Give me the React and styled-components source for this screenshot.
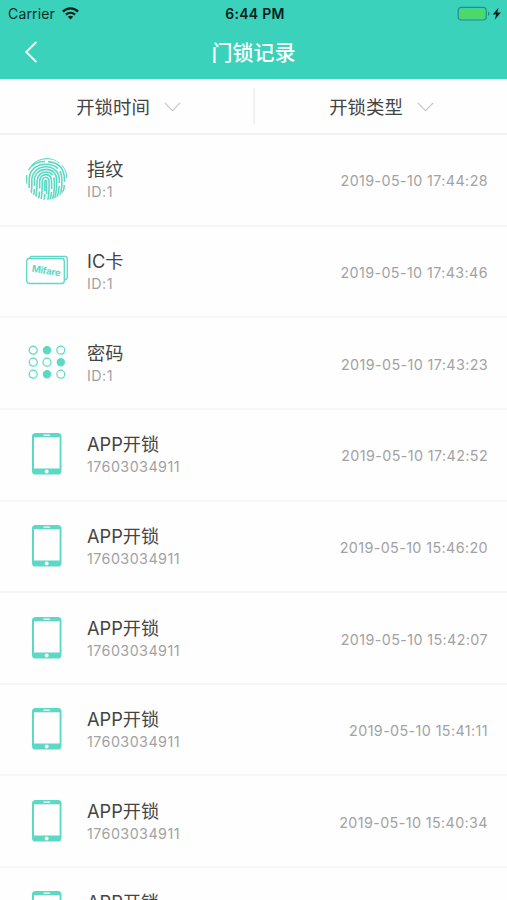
import React from "react";
import styled, { createGlobalStyle } from "styled-components";

const GlobalStyle = createGlobalStyle`
  * {
    box-sizing: border-box;
  }
  html,
  body {
    margin: 0;
    background: #fefefe;
    overflow: hidden;
  }
`;

const Screen = styled.main`
  width: 507px;
  height: 900px;
  overflow: hidden;
  background: #fefefe;
  font-family: Inter, "Noto Sans CJK SC", sans-serif;
  color: #444;
`;

const Header = styled.header`
  height: 79px;
  background: #3ad2bb;
`;

const StatusBar = styled.div`
  height: 27px;
  display: grid;
  grid-template-columns: 1fr auto 1fr;
  align-items: center;
  padding: 0 5px 0 8px;
  color: #0b2b27;
  font-size: 14px;
`;

const Carrier = styled.div`
  display: flex;
  align-items: center;
  gap: 7px;
  letter-spacing: 0.15px;
`;

const Clock = styled.div`
  font-weight: 600;
  color: #06201c;
  letter-spacing: 0.3px;
`;

const Power = styled.div`
  display: flex;
  justify-content: flex-end;
`;

const NavBar = styled.div`
  height: 50px;
  display: grid;
  grid-template-columns: 60px 1fr 60px;
  align-items: center;
`;

const BackButton = styled.button`
  border: 0;
  padding: 0 0 0 24px;
  background: none;
  display: flex;
`;

const Title = styled.h1`
  margin: 2px 0 0;
  text-align: center;
  color: #fff;
  font-size: 21px;
  line-height: 30px;
  font-weight: 500;
`;

const Filters = styled.section`
  height: 56px;
  display: flex;
  align-items: center;
  border-bottom: 2px solid #f1f1f1;
`;

const Filter = styled.div`
  width: 253px;
  display: flex;
  align-items: center;
  justify-content: center;
  gap: 14px;
  height: 36px;
  padding-left: 4px;
  font-size: 18.4px;
  svg {
    margin-top: 2px;
  }
  & + & {
    width: 254px;
    padding-left: 1px;
    border-left: 2px solid #f1f1f1;
  }
`;

const Row = styled.article`
  height: 91.65px;
  display: flex;
  align-items: center;
  padding: 0 19px 1px 25px;
  border-bottom: 2px solid #f6f6f6;
`;

const IconBox = styled.div`
  width: 44px;
  height: 44px;
  margin-right: 18px;
  svg {
    display: block;
  }
`;

const Info = styled.div`
  flex: 1;
  padding-top: 1px;
`;

const Name = styled.div`
  font-size: 18.2px;
  line-height: 24px;
`;

const Detail = styled.div`
  font-size: 14.3px;
  line-height: 21px;
  letter-spacing: 0.45px;
  color: #a2a2a2;
`;

const Time = styled.time`
  padding-top: 3px;
  font-size: 14.3px;
  letter-spacing: 0.4px;
  color: #a2a2a2;
`;

const MINT = "#5dd8c4";

const WifiIcon = () => (
  <svg width="17" height="13" viewBox="0 0 17 13" fill="none" stroke="#06201c" strokeWidth="2.2">
    <path d="M0.9 4.6C5.2 0.3 11.8 0.3 16.1 4.6" />
    <path d="M3.9 7.6C6.5 5.1 10.5 5.1 13.1 7.6" />
    <path d="M8.5 12.4L5.8 9.7C7.3 8.3 9.7 8.3 11.2 9.7Z" fill="#06201c" stroke="none" />
  </svg>
);

const BatteryIcon = () => (
  <svg width="46" height="16" viewBox="0 0 46 16">
    <rect x="2.2" y="1.4" width="28" height="12.6" rx="3" fill="none" stroke="#278f82" strokeWidth="1.2" />
    <rect x="3.6" y="2.8" width="25.2" height="9.8" rx="1.6" fill="#4cd964" />
    <path d="M32 5.6Q33.6 6.4 33.6 7.7T32 9.8Z" fill="#278f82" />
    <path d="M42.6 1.4L36.8 8.6H40.1L38.8 13.8L44.8 6.6H41.2Z" fill="#06201c" />
  </svg>
);

const BackIcon = () => (
  <svg width="14" height="22" viewBox="0 0 14 22" fill="none" stroke="#fff" strokeWidth="1.8">
    <path d="M12.4 1L2.2 11L12.4 21" />
  </svg>
);

const ChevronIcon = () => (
  <svg width="17" height="10" viewBox="0 0 17 10" fill="none" stroke="#c6c6c6" strokeWidth="1.2">
    <path d="M0.8 0.8L8.5 8.6L16.2 0.8" />
  </svg>
);

const FingerprintIcon = () => (
  <svg width="44" height="44" viewBox="0 0 44 44" fill="none" stroke={MINT} strokeWidth="1.6">
    <clipPath id="finger">
      <circle cx="21.7" cy="22" r="20.9" />
    </clipPath>
    <g clipPath="url(#finger)">
      <path d="M6.5 8C14.5 0 27.5 -0.4 35 5.8M37 7.8C40.2 11.2 42 15.5 42 21" />
      <path d="M3.4 13C7.5 6.6 14 4.5 20 4.5M23 4.6C29.5 5 35.6 8.4 38 14C39.8 18.4 39.6 22 39.5 25M39.3 28C39.2 31 38.6 34 37.5 36" />
      <path d="M1.5 27V18M4.2 31C4.3 28 4.1 24 4.3 21C5 12.6 12 7.3 20.6 7.2C26 7.2 30 8.6 33 11.6M34.8 14C37 17.4 37 21 36.9 25C36.8 30 36.4 35 34.5 40" />
      <path d="M5.8 37C7.2 33 6.7 28 6.8 23C7 15.4 13 9.8 20.9 9.8C28.6 9.8 34.3 15.2 34.3 22.5V26M34.2 29C34 33 33.5 37 31.5 42" />
      <path d="M7.6 39.5C9.3 37 9.3 34.5 9.4 32M9.4 29V23.5C9.5 17 14.5 12.4 21 12.4C27.6 12.4 31.7 17 31.7 23C31.8 30 31.8 36 29 43" />
      <path d="M10 41.5C11.9 38 12 33 12 24.5C12 18.8 15.9 15 21 15C24 15 26 16 27.6 18M28.9 20.5C29.5 24 29.2 33 28.8 36C28.4 39 28 41 27 43" />
      <path d="M12.8 42.5C14.4 40 14.5 37 14.6 34.5M14.6 31.5V25C14.6 20.4 17.2 17.6 20.9 17.6C24.6 17.6 26.6 20.6 26.6 25V32M26.5 35C26.3 38 25.8 41 25 43" />
      <path d="M15.9 43C17.2 39 17.2 33 17.2 25.5C17.2 22.2 18.6 20.2 20.8 20.2C23 20.2 24.1 22.4 24.1 25.5C24.1 33 24.2 38 22.8 43" />
      <path d="M19 43C19.8 41 19.8 39 19.8 37M19.8 34V25.5C19.8 22.4 21.6 22.4 21.6 25.5V37" />
    </g>
  </svg>
);

const CardText = styled.text`
  font-family: Inter, sans-serif;
  font-size: 9.6px;
  font-weight: 700;
`;

const CardIcon = () => (
  <svg width="44" height="44" viewBox="0 0 44 44" fill="none" stroke={MINT} strokeWidth="1.3">
    <path d="M4.5 9.6C4.8 8 5.6 7.3 7 7.3H39.5C41.2 7.3 42.3 8.4 42.3 10V28.2C42.3 29.8 41.4 30.6 39.5 30.7" />
    <rect x="1.7" y="9.5" width="37.6" height="25" rx="2.8" />
    <CardText x="6.4" y="22.8" fill={MINT} stroke="none" textLength="29" transform="rotate(9 6.4 22.8)">
      Mifare
    </CardText>
  </svg>
);

const DOTS = [0, 1, 0, 0, 0, 1, 0, 1, 0];

const KeypadIcon = () => (
  <svg width="44" height="44" viewBox="0 0 44 44" stroke={MINT} strokeWidth="1.2">
    {DOTS.map((on, i) => (
      <circle
        key={i}
        cx={8.2 + (i % 3) * 13.8}
        cy={9.2 + Math.floor(i / 3) * 12}
        r={on ? 3.6 : 4}
        fill={on ? MINT : "none"}
      />
    ))}
  </svg>
);

const PhoneIcon = () => (
  <svg width="44" height="44" viewBox="0 0 44 44">
    <rect x="7" y="1" width="29.5" height="41.5" rx="3.6" fill={MINT} />
    <rect x="9" y="5.3" width="25.6" height="31.2" fill="#fefefe" />
    <rect x="18.3" y="2.4" width="7" height="1.4" rx="0.7" fill="#fefefe" />
    <circle cx="21.7" cy="39.5" r="1.9" fill="#fefefe" />
  </svg>
);

const icons = {
  finger: <FingerprintIcon />,
  card: <CardIcon />,
  code: <KeypadIcon />,
  app: <PhoneIcon />
};

const records = [
  { type: "finger", name: "指纹", detail: "ID:1", time: "2019-05-10 17:44:28" },
  { type: "card", name: "IC卡", detail: "ID:1", time: "2019-05-10 17:43:46" },
  { type: "code", name: "密码", detail: "ID:1", time: "2019-05-10 17:43:23" },
  { type: "app", name: "APP开锁", detail: "17603034911", time: "2019-05-10 17:42:52" },
  { type: "app", name: "APP开锁", detail: "17603034911", time: "2019-05-10 15:46:20" },
  { type: "app", name: "APP开锁", detail: "17603034911", time: "2019-05-10 15:42:07" },
  { type: "app", name: "APP开锁", detail: "17603034911", time: "2019-05-10 15:41:11" },
  { type: "app", name: "APP开锁", detail: "17603034911", time: "2019-05-10 15:40:34" },
  { type: "app", name: "APP开锁" }
];

const Record = ({ type, name, detail, time }) => (
  <Row>
    <IconBox>{icons[type]}</IconBox>
    <Info>
      <Name>{name}</Name>
      <Detail>{detail || "\u00a0"}</Detail>
    </Info>
    {time && <Time>{time}</Time>}
  </Row>
);

export default function App() {
  return (
    <Screen>
      <GlobalStyle />
      <Header>
        <StatusBar>
          <Carrier>
            Carrier <WifiIcon />
          </Carrier>
          <Clock>6:44 PM</Clock>
          <Power>
            <BatteryIcon />
          </Power>
        </StatusBar>
        <NavBar>
          <BackButton>
            <BackIcon />
          </BackButton>
          <Title>门锁记录</Title>
        </NavBar>
      </Header>
      <Filters>
        <Filter>
          开锁时间 <ChevronIcon />
        </Filter>
        <Filter>
          开锁类型 <ChevronIcon />
        </Filter>
      </Filters>
      {records.map((record, i) => (
        <Record key={i} {...record} />
      ))}
    </Screen>
  );
}
